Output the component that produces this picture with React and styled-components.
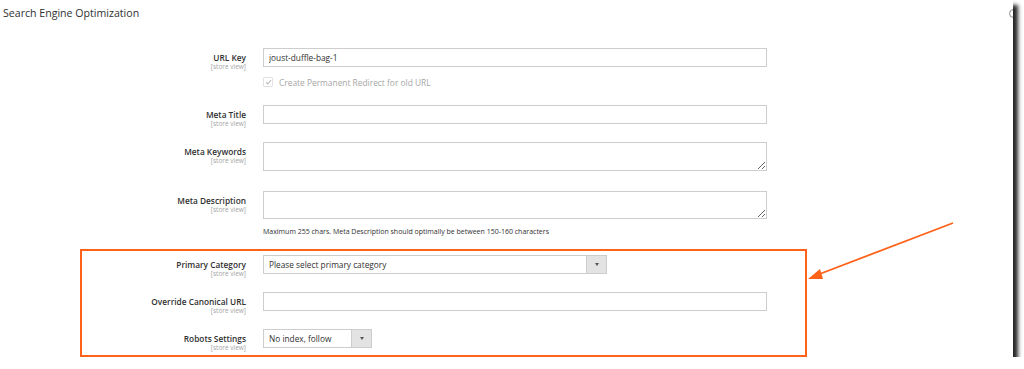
import React from 'react'
import styled, { createGlobalStyle } from 'styled-components'

const GlobalStyle = createGlobalStyle`
  html, body {
    margin: 0;
    padding: 0;
    background: #fff;
  }
  body {
    font-family: 'Open Sans', 'Liberation Sans', sans-serif;
  }
`

const Card = styled.div`
  position: relative;
  width: 1013px;
  height: 357px;
  background: #fff;
  overflow: hidden;
  box-shadow: 5px 5px 4px rgba(0, 0, 0, 0.85);
`

const Header = styled.div`
  display: flex;
  align-items: center;
  justify-content: space-between;
  height: 26px;
  padding-left: 3px;
`

const Title = styled.h2`
  margin: 0;
  font-size: 10.6px;
  font-weight: 400;
  color: #303030;
`

const CollapseIcon = styled.span`
  width: 7px;
  height: 7px;
  border: 1px solid #8a8a8a;
  border-radius: 50%;
  margin-right: -5px;
`

const Form = styled.div`
  display: flex;
  flex-direction: column;
`

const Row = styled.div`
  display: grid;
  grid-template-columns: ${p => p.$labelCol}px auto;
  column-gap: 17px;
  align-items: start;
  margin-top: ${p => p.$gap}px;
`

const LabelBox = styled.div`
  text-align: right;
  padding-top: 5px;
  white-space: nowrap;
`

const Label = styled.div`
  font-size: 8.3px;
  line-height: 10px;
  font-weight: 600;
  color: #303030;
`

const Scope = styled.div`
  font-size: 6.5px;
  line-height: 8px;
  color: #a3a3a3;
`

const Input = styled.input`
  box-sizing: border-box;
  display: block;
  width: ${p => p.$w || 504}px;
  height: 19px;
  margin: 0;
  padding: 0 5px;
  border: 1px solid #cdcdcd;
  border-radius: 0;
  font-family: 'Open Sans', sans-serif;
  font-size: 8.3px;
  color: #303030;
  outline: none;
`

const TextArea = styled.textarea`
  box-sizing: border-box;
  display: block;
  width: 504px;
  height: ${p => p.$h}px;
  margin: 0;
  padding: 3px 5px;
  border: 1px solid #cdcdcd;
  border-radius: 0;
  resize: vertical;
  font-family: 'Open Sans', sans-serif;
  font-size: 8.3px;
  outline: none;
`

const CheckRow = styled.div`
  display: flex;
  align-items: center;
  gap: 6px;
  height: 10px;
  margin-top: 6px;
  margin-left: 263px;
`

const CheckBox = styled.span`
  box-sizing: border-box;
  width: 10px;
  height: 10px;
  border: 1px solid #e2e2e2;
  border-radius: 1px;
  display: flex;
  align-items: center;
  justify-content: center;
`

const CheckText = styled.span`
  font-size: 8.4px;
  color: #a6a6a6;
`

const Note = styled.div`
  margin-top: 8px;
  margin-left: 263px;
  font-size: 7px;
  line-height: 10px;
  color: #303030;
`

const Highlight = styled.div`
  box-sizing: border-box;
  width: 727px;
  height: 108px;
  margin-top: 12px;
  margin-left: 80px;
  padding-top: 4px;
  border: 2px solid #ff6219;
`

const Select = styled.div`
  box-sizing: border-box;
  width: ${p => p.$w}px;
  height: 19px;
  display: flex;
  border: 1px solid #cdcdcd;
`

const SelectValue = styled.span`
  flex: 1;
  display: flex;
  align-items: center;
  padding: 0 5px;
  font-size: 8.3px;
  color: #303030;
`

const SelectButton = styled.span`
  width: 19px;
  display: flex;
  align-items: center;
  justify-content: center;
  background: #e3e3e3;
  border-left: 1px solid #cdcdcd;
`

const Caret = styled.span`
  width: 0;
  height: 0;
  border-left: 2px solid transparent;
  border-right: 2px solid transparent;
  border-top: 3px solid #555;
`

const Pointer = styled.svg`
  position: absolute;
  left: 800px;
  top: 215px;
`

function Field({ label, gap, labelCol = 246, children }) {
  return (
    <Row $gap={gap} $labelCol={labelCol}>
      <LabelBox>
        <Label>{label}</Label>
        <Scope>[store view]</Scope>
      </LabelBox>
      <div>{children}</div>
    </Row>
  )
}

function SelectField({ value, width }) {
  return (
    <Select $w={width}>
      <SelectValue>{value}</SelectValue>
      <SelectButton>
        <Caret />
      </SelectButton>
    </Select>
  )
}

export default function App() {
  return (
    <>
      <GlobalStyle />
      <Card>
        <Header>
          <Title>Search Engine Optimization</Title>
          <CollapseIcon />
        </Header>

        <Form>
          <Field label="URL Key" gap={22}>
            <Input defaultValue="joust-duffle-bag-1" />
          </Field>
          <CheckRow>
            <CheckBox>
              <svg width="7" height="6" viewBox="0 0 7 6">
                <path d="M1 3.2 L2.8 5 L6 1" fill="none" stroke="#b8b8b8" strokeWidth="1.1" />
              </svg>
            </CheckBox>
            <CheckText>Create Permanent Redirect for old URL</CheckText>
          </CheckRow>

          <Field label="Meta Title" gap={18}>
            <Input />
          </Field>
          <Field label="Meta Keywords" gap={14}>
            <TextArea $h={29} />
          </Field>
          <Field label="Meta Description" gap={20}>
            <TextArea $h={28} />
          </Field>
          <Note>Maximum 255 chars. Meta Description should optimally be between 150-160 characters</Note>

          <Highlight>
            <Field label="Primary Category" gap={0} labelCol={164}>
              <SelectField value="Please select primary category" width={344} />
            </Field>
            <Field label="Override Canonical URL" gap={14} labelCol={164}>
              <Input />
            </Field>
            <Field label="Robots Settings" gap={14} labelCol={164}>
              <SelectField value="No index, follow" width={109} />
            </Field>
          </Highlight>
        </Form>

        <Pointer width="160" height="70" viewBox="0 0 160 70">
          <line x1="153" y1="8" x2="17" y2="60" stroke="#ff6219" strokeWidth="1.8" />
          <polygon points="8,64 20,54 23,64" fill="#ff6219" />
        </Pointer>
      </Card>
    </>
  )
}
